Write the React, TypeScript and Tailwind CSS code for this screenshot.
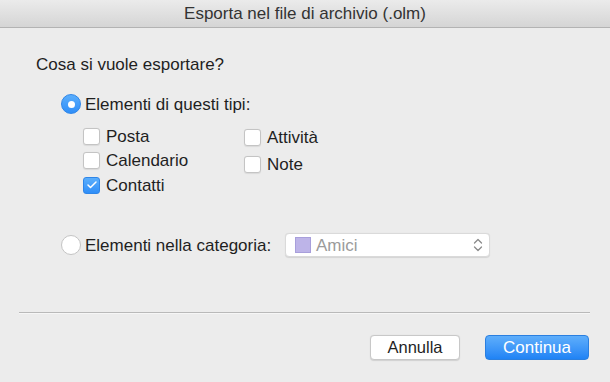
import { Check } from 'lucide-react'

const font = { fontFamily: '"Liberation Sans", Arial, sans-serif' }

function Checkbox({ checked, label }: { checked?: boolean; label: string }) {
  return (
    <div className="flex items-center h-[16px]">
      {checked ? (
        <div className="w-[17px] h-[17px] rounded-[3px] bg-gradient-to-b from-[#5aaefc] to-[#2f8ef8] border border-[#2f86e8] flex items-center justify-center">
          <Check className="w-[12px] h-[12px] text-white" strokeWidth={3} />
        </div>
      ) : (
        <div className="w-[17px] h-[17px] rounded-[3px] bg-white border border-[#c4c4c4] shadow-[0_0.5px_1px_rgba(0,0,0,0.08)]" />
      )}
      <span className="ml-[6px] text-[17px] text-[#1f1f1f] leading-none">{label}</span>
    </div>
  )
}

function Radio({ checked, label }: { checked?: boolean; label: string }) {
  return (
    <div className="flex items-center">
      {checked ? (
        <div className="w-[20px] h-[20px] rounded-full bg-gradient-to-b from-[#5aaefc] to-[#2f8ef8] border border-[#2f86e8] flex items-center justify-center">
          <div className="w-[7px] h-[7px] rounded-full bg-white" />
        </div>
      ) : (
        <div className="w-[20px] h-[20px] rounded-full bg-white border border-[#c4c4c4]" />
      )}
      <span className="ml-[4px] text-[17px] text-[#1f1f1f] leading-none">{label}</span>
    </div>
  )
}

export default function App() {
  return (
    <div className="w-[610px] h-[382px] bg-[#ececec] flex flex-col overflow-hidden" style={font}>
      <div className="h-[28px] shrink-0 bg-gradient-to-b from-[#ebebeb] to-[#d5d5d5] border-b border-[#b3b3b3] flex items-center justify-center">
        <span className="text-[17px] text-[#333333]">Esporta nel file di archivio (.olm)</span>
      </div>

      <div className="pl-[36px] pt-[27px] flex flex-col">
        <div className="text-[17px] leading-[20px] text-[#1f1f1f]">Cosa si vuole esportare?</div>

        <div className="ml-[25px] mt-[19px]">
          <Radio checked label="Elementi di questi tipi:" />
        </div>

        <div className="ml-[47px] mt-[14px] flex">
          <div className="w-[161px] flex flex-col gap-[8.5px]">
            <Checkbox label="Posta" />
            <Checkbox label="Calendario" />
            <Checkbox checked label="Contatti" />
          </div>
          <div className="mt-[1px] flex flex-col gap-[11px]">
            <Checkbox label="Attività" />
            <Checkbox label="Note" />
          </div>
        </div>

        <div className="ml-[25px] mt-[40px] flex items-center h-[24px]">
          <Radio label="Elementi nella categoria:" />
          <div className="ml-auto mr-[120px] w-[205px] h-[24px] bg-white border border-[#dadada] rounded-[4px] shadow-[0_0.5px_1px_rgba(0,0,0,0.1)] flex items-center pl-[9px] pr-[6px]">
            <div className="w-[16px] h-[16px] bg-[#bdb4e8] border border-[#a89fdb]" />
            <span className="ml-[5px] text-[17px] text-[#9b9b9b] leading-none">Amici</span>
            <svg className="ml-auto" width="10" height="16" viewBox="0 0 10 16" fill="none" stroke="#8a8a8a" strokeWidth="1.3" strokeLinecap="round" strokeLinejoin="round">
              <path d="M1.5 6 L5 2.5 L8.5 6" />
              <path d="M1.5 10 L5 13.5 L8.5 10" />
            </svg>
          </div>
        </div>
      </div>

      <div className="mx-[19px] mr-[20px] mt-[55px] h-[2px] border-t border-[#b9b9b9] border-b border-b-[#f6f6f6]" />

      <div className="mt-[21px] pr-[21px] flex justify-end gap-[25px]">
        <button className="w-[90px] h-[25px] bg-white border border-[#c8c8c8] rounded-[4px] shadow-[0_0.5px_1px_rgba(0,0,0,0.12)] text-[16.5px] text-[#1f1f1f] flex items-center justify-center">
          Annulla
        </button>
        <button className="w-[104px] h-[25px] bg-gradient-to-b from-[#5eaefb] to-[#1f83f5] border border-[#2a7fe0] rounded-[4px] text-[17px] text-white flex items-center justify-center">
          Continua
        </button>
      </div>
    </div>
  )
}
